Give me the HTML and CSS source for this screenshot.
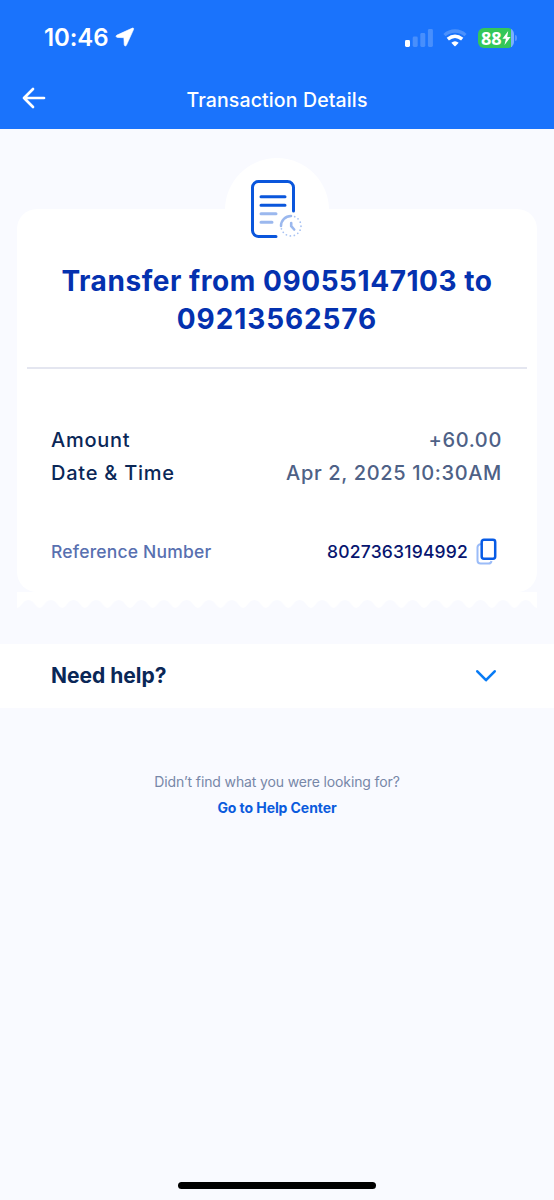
FILE: index.html
```html
<!DOCTYPE html>
<html lang="en">
<head>
<meta charset="utf-8">
<title>Transaction Details</title>
<link rel="stylesheet" href="styles.css">
</head>
<body>
<header class="header">
  <div class="status">
    <span class="clock">10:46</span>
    <svg class="location" width="20" height="20" viewBox="0 0 20 20"><path d="M17.400 1.100 2 8.100c-1.500.7-1.100 2.200.4 2.300l6.500.3.3 6.900c.1 1.600 1.600 2 2.300.5l7-15.500c.5-1.100-.2-1.900-1.100-1.500Z" fill="#fff" stroke="#fff" stroke-width=".6"/></svg>
    <svg class="signal" width="28" height="18" viewBox="0 0 28 18" fill="#fff"><rect x="0" y="11" width="5" height="7" rx="1.4"/><g opacity=".2"><rect x="7.7" y="7.6" width="5" height="10.4" rx="1.4"/><rect x="15.3" y="4" width="5" height="14" rx="1.4"/><rect x="22.9" y="0" width="5" height="18" rx="1.4"/></g></svg>
    <svg class="wifi" width="24" height="18" viewBox="0 0 24 18"><path d="M1.500 6.100C7.500.6 16.500.6 22.500 6.100" fill="none" stroke="#fff" stroke-opacity=".22" stroke-width="3.300"/><path d="M4.800 10.200Q12 4.200 19.200 10.200" fill="none" stroke="#fff" stroke-width="3.500"/><path d="M8.300 13.700Q12 10.600 15.700 13.700L12.600 16.900Q12 17.500 11.400 16.900Z" fill="#fff"/></svg>
    <div class="battery">
      <div class="battery-body"><span>88</span><svg width="9" height="14" viewBox="0 0 9 14"><path d="M6.200 0 .4 7.800h3.500L2.500 14 8.600 5.900H5.200Z" fill="#fff"/></svg></div>
      <i class="battery-cap"></i>
    </div>
  </div>
  <nav class="navbar">
    <svg class="back" width="24" height="22" viewBox="0 0 24 22"><path d="M22 11H2M11 2 2 11l9 9" fill="none" stroke="#fff" stroke-width="2.700" stroke-linecap="round" stroke-linejoin="round"/></svg>
    <h1 class="page-title">Transaction Details</h1>
  </nav>
</header>
<main>
  <section class="receipt">
    <div class="badge">
      <svg class="document" width="52" height="60" viewBox="0 0 52 60" fill="none" stroke-linecap="round">
        <path d="M26 57.500H8.500a6 6 0 0 1-6-6v-43a6 6 0 0 1 6-6h29a6 6 0 0 1 6 6V32" stroke="#0a56dc" stroke-width="3"/>
        <path d="M11 17.800h24M11 26.300h24" stroke="#0a56dc" stroke-width="3"/>
        <path d="M11 34.800h15M11 43.300h11" stroke="#9bb8ee" stroke-width="3"/>
        <path d="M31 47a10 10 0 0 1 10-10" stroke="#9bb8ee" stroke-width="2.500"/>
        <path d="M44.700 37.700a10 10 0 1 1-13.300 12.100" stroke="#a9c3f3" stroke-width="1.800" stroke-dasharray="0 4"/>
        <path d="M41.200 44v3.200l3 3.300" stroke="#9bb8ee" stroke-width="2.600" stroke-linejoin="round"/>
      </svg>
    </div>
    <h2 class="title"><span class="first">Transfer from 09055147103 to</span><br><span class="second">09213562576</span></h2>
    <div class="rows">
      <div class="row"><span class="label">Amount</span><span class="value">+60.00</span></div>
      <div class="row"><span class="label">Date &amp; Time</span><span class="value">Apr 2, 2025 10:30AM</span></div>
    </div>
    <div class="reference">
      <span class="ref-label">Reference Number</span>
      <span class="ref-value">8027363194992</span>
      <svg width="21" height="27" viewBox="0 0 21 27" fill="none"><path d="M5 6.300H4.500a3 3 0 0 0-3 3v13.200a3 3 0 0 0 3 3h8a3 3 0 0 0 3-2.500" stroke="#9bbcf8" stroke-width="2"/><rect x="5.700" y="1.700" width="13.500" height="19" rx="2.200" stroke="#075be5" stroke-width="2.500"/></svg>
    </div>
  </section>
  <svg class="edge" width="520" height="16" viewBox="0 0 520 16">
    <defs><pattern id="teeth" width="22.610" height="16" patternUnits="userSpaceOnUse"><path d="M0 0H22.610V16Q20.500 16 18.500 13L15.500 9.500Q11.300 6.500 7.100 9.500L4.100 13Q2.100 16 0 16Z" fill="#fff"/></pattern></defs>
    <rect width="520" height="16" fill="url(#teeth)"/>
  </svg>
  <section class="help">
    <span class="help-title">Need help?</span>
    <svg width="22" height="14" viewBox="0 0 22 14"><path d="m2.300 2.300 8.700 8.900 8.700-8.900" fill="none" stroke="#087bf5" stroke-width="2.600" stroke-linecap="round" stroke-linejoin="round"/></svg>
  </section>
  <footer class="footer">
    <p class="question">Didn’t find what you were looking for?</p>
    <a class="link">Go to Help Center</a>
  </footer>
</main>
<div class="home-indicator"></div>
</body>
</html>
```
FILE: styles.css
```css
* { box-sizing: border-box; }
body {
  margin: 0;
  height: 1200px;
  background: #f9faff;
  font-family: Inter, "Liberation Sans", sans-serif;
  display: flex;
  flex-direction: column;
  white-space: nowrap;
}
svg { display: block; flex: none; }
.header { height: 129px; background: #1a73fc; color: #fff; }
.status { height: 75px; padding: 0 37px 0 44px; display: flex; align-items: center; }
.clock { font-size: 24px; font-weight: 600; letter-spacing: -.1px; width: 71px; }
.location { margin-top: -1px; }
.signal { margin-left: auto; }
.wifi { margin-left: 10px; }
.battery { margin-left: 11px; display: flex; align-items: center; gap: 1px; }
.battery-body {
  width: 36px; height: 20px; border-radius: 6px;
  background: linear-gradient(90deg, #34c759 92%, #7bafff 92%);
  display: flex; align-items: center; padding-left: 3px;
  font: 700 18px/20px "Open Sans", sans-serif;
}
.battery-cap { width: 2px; height: 6px; border-radius: 0 2px 2px 0; background: #5795fd; }
.navbar { height: 46px; display: grid; grid-template-columns: 46px 1fr 46px; align-items: center; }
.back { margin-left: 22px; }
.page-title { margin: 4px 0 0; text-align: center; font-size: 19.500px; line-height: 24px; font-weight: 500; letter-spacing: .13px; }
main { flex: 1; }
.receipt {
  margin: 80px 17px 0; height: 383px; padding: 0 35px 0 34px;
  border-radius: 20px; background: #fff;
}
.badge {
  width: 104px; height: 104px; margin: 0 auto -53px; transform: translateY(-51px);
  border-radius: 50%; background: #fff; display: grid; place-items: center;
}
.document { margin: -2px 0 0 -1px; }
.title {
  margin: 0 -25px 0 -24px; padding-top: 2px; height: 109px; border-bottom: 2px solid #e4e6f0;
  color: #0431af; font-size: 28px; line-height: 38px; font-weight: 700; text-align: center;
}
.first { letter-spacing: .55px; }
.second { letter-spacing: .9px; }
.rows { margin-top: 55px; }
.row { display: flex; justify-content: space-between; font-size: 20px; line-height: 33px; }
.label { color: #0a2757; font-weight: 500; letter-spacing: .75px; }
.value { color: #4e6186; font-weight: 500; letter-spacing: .65px; }
.reference { display: flex; align-items: center; height: 28px; margin-top: 47px; padding-right: 5px; }
.ref-label { color: #5870b0; font-size: 17.500px; font-weight: 500; letter-spacing: .2px; }
.ref-value { color: #07156f; font-size: 17.500px; font-weight: 500; letter-spacing: .2px; margin-left: auto; margin-right: 8px; }
.edge { margin-left: 17px; }
.help { margin-top: 36px; height: 64px; background: #fff; padding: 0 57px 0 51px; display: flex; align-items: center; justify-content: space-between; }
.help-title { color: #0a2757; font-size: 21px; font-weight: 700; margin-top: -1px; }
.footer { padding-top: 61px; text-align: center; }
.question { margin: 0; color: #7787a8; font-size: 14px; line-height: 26px; letter-spacing: -.13px; }
.link { display: block; color: #0b5bdd; font-size: 14px; line-height: 26px; font-weight: 700; letter-spacing: -.08px; }
.home-indicator { width: 198px; height: 7px; margin: 0 auto 11px; border-radius: 4px; background: #000; }
```
